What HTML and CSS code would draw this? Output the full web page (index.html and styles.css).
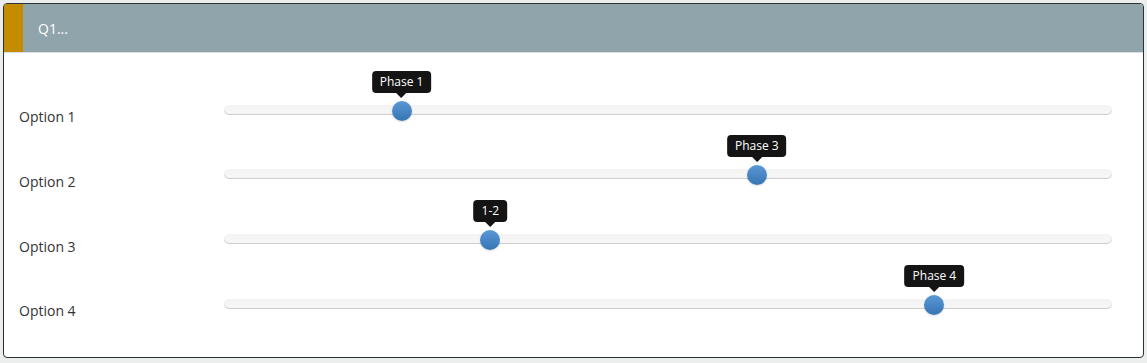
FILE: index.html
```html
<!DOCTYPE html>
<html>
<head>
	<meta charset="utf-8">
	<link rel="stylesheet" href="styles.css">
</head>
<body class="body">

	<div class="panel">
		<div class="panelHeader">
			<div class="headerStripe"></div>
			<span class="headerTitle">Q1...</span>
		</div>

		<div class="panelBody">
			<div class="sliderRow">
				<span class="rowLabel">Option 1</span>
				<div class="track">
					<div class="handle" style="left: 20%;">
						<div class="tip">Phase 1</div>
					</div>
				</div>
			</div>
			<div class="sliderRow">
				<span class="rowLabel">Option 2</span>
				<div class="track">
					<div class="handle" style="left: 60%;">
						<div class="tip">Phase 3</div>
					</div>
				</div>
			</div>
			<div class="sliderRow">
				<span class="rowLabel">Option 3</span>
				<div class="track">
					<div class="handle" style="left: 30%;">
						<div class="tip">1-2</div>
					</div>
				</div>
			</div>
			<div class="sliderRow">
				<span class="rowLabel">Option 4</span>
				<div class="track">
					<div class="handle" style="left: 80%;">
						<div class="tip">Phase 4</div>
					</div>
				</div>
			</div>
		</div>
	</div>

</body>
</html>
```

FILE: styles.css
```css
.body {
	margin: 0;
	padding: 3px;
	background-color: #eceeee;
	font-family: "Open Sans", "Noto Sans", sans-serif;
}

.panel {
	height: 355px;
	box-sizing: border-box;
	background-color: #ffffff;
	border: 1px solid #2b3033;
	border-radius: 4px;
	overflow: hidden;
}

.panelHeader {
	display: flex;
	align-items: center;
	height: 48px;
	background-color: #90a4ac;
	border-bottom: 1px solid #d9dfe2;
}

.headerStripe {
	width: 19px;
	height: 100%;
	background-color: #c48d00;
}

.headerTitle {
	padding-left: 15px;
	color: #ffffff;
	font-size: 14px;
}

.panelBody {
	padding-top: 24.5px;
	padding-right: 31px;
}

.sliderRow {
	display: flex;
	align-items: center;
	height: 64.67px;
}

.rowLabel {
	width: 220px;
	padding-left: 15px;
	box-sizing: border-box;
	margin-top: 14px;
	color: #333333;
	font-size: 14px;
}

.track {
	position: relative;
	flex: 1;
	height: 10px;
	border-radius: 5px;
	background: linear-gradient(#f3f3f3, #f8f8f8);
	box-shadow: inset 0 -1px 1px rgba(0, 0, 0, 0.18);
}

.handle {
	position: absolute;
	top: -4px;
	width: 20px;
	height: 20px;
	margin-left: -10px;
	border-radius: 50%;
	background: linear-gradient(#5a99d6, #3674b3);
	box-shadow: 0 1px 2px rgba(0, 0, 0, 0.15);
}

.tip {
	position: absolute;
	bottom: 28px;
	left: 50%;
	transform: translateX(-50%);
	white-space: nowrap;
	padding: 3px 8px;
	line-height: 16px;
	border-radius: 4px;
	background-color: #141414;
	color: #ffffff;
	font-size: 12px;
}

.tip::after {
	content: "";
	position: absolute;
	left: 50%;
	top: 100%;
	margin-left: -5px;
	border-left: 5px solid transparent;
	border-right: 5px solid transparent;
	border-top: 5px solid #141414;
}
```
